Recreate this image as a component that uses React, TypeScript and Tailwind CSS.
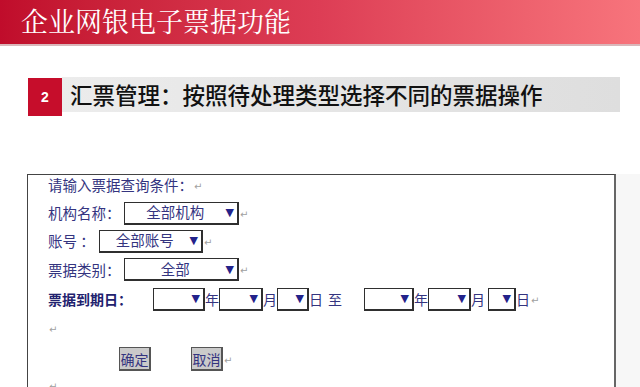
const navy = "text-[#34347f]"

function Select({ w, label, className = "" }: { w: string; label?: string; className?: string }) {
  return (
    <div
      className={`${w} h-[23px] border border-[#2f2f2f] border-r-2 border-b-2 bg-white flex items-center ${className}`}
    >
      <span className="flex-1 text-center text-[14.5px] leading-none">{label}</span>
      <span className="text-[11px] text-[#23238a] pr-[3px] font-['DejaVu_Sans'] leading-none">▼</span>
    </div>
  )
}

function Ret() {
  return <span className="text-[10px] text-[#a0a0a0] font-['DejaVu_Sans'] ml-[1px] mt-[2px]">↵</span>
}

export default function App() {
  return (
    <div className="w-[640px] h-[387px] overflow-hidden bg-white font-['Noto_Sans_CJK_SC',sans-serif]">
      {/* Header band */}
      <div className="h-[46px] bg-gradient-to-r from-[#c00c2b] via-[#dd3d55] to-[#f7747c] border-b-2 border-[#d9b7ba] flex items-center pl-[21px]">
        <h1 className="text-[27px] text-white font-['Noto_Serif_CJK_SC','Noto_Sans_CJK_SC',serif] -mt-[4px] leading-none">
          企业网银电子票据功能
        </h1>
      </div>

      {/* Section title */}
      <div className="flex mt-[32px] ml-[28px]">
        <div className="w-[34px] h-[38px] bg-[#c60d2b] flex items-center justify-center text-white font-bold text-[14px] font-['Liberation_Sans','Noto_Sans_CJK_SC',sans-serif]">
          2
        </div>
        <div className="w-[558px] h-[35px] -mt-[1px] bg-gradient-to-r from-[#ececec] to-[#dedede] flex items-center pl-[8px]">
          <span className="text-[22.5px] text-[#111] font-medium leading-none">汇票管理：按照待处理类型选择不同的票据操作</span>
        </div>
      </div>

      {/* Form area */}
      <div className="flex mt-[58px]">
        <div className="ml-[27px] w-[589px] h-[230px] border-t border-l border-[#444] border-r-2 border-r-[#666] pl-[20px] flex flex-col">
          <div className={`h-[20px] flex items-center text-[14.5px] ${navy}`}>
            请输入票据查询条件：<Ret />
          </div>
          <div className={`h-[28px] mt-[4px] flex items-center text-[14.5px] ${navy}`}>
            <span className="w-[76px]">机构名称：</span>
            <Select w="w-[115px]" label="全部机构" />
            <Ret />
          </div>
          <div className={`h-[28px] flex items-center text-[14.5px] ${navy}`}>
            <span className="w-[51px]">账号 ：</span>
            <Select w="w-[104px]" label="全部账号" />
            <Ret />
          </div>
          <div className={`h-[29px] flex items-center text-[14.5px] ${navy}`}>
            <span className="w-[76px]">票据类别：</span>
            <Select w="w-[115px]" label="全部" />
            <Ret />
          </div>
          <div className={`h-[30px] flex items-center text-[14px] ${navy}`}>
            <span className="w-[105px] font-bold text-[#22226e]">票据到期日：</span>
            <Select w="w-[52px]" />
            <span>年</span>
            <Select w="w-[44px]" />
            <span>月</span>
            <Select w="w-[32px]" />
            <span>日</span>
            <span className="ml-[5px]">至</span>
            <Select w="w-[50px]" className="ml-[22px]" />
            <span>年</span>
            <Select w="w-[43px]" />
            <span>月</span>
            <Select w="w-[28px]" className="ml-[3px]" />
            <span>日</span>
            <Ret />
          </div>
          <div className="h-[29px] flex items-center">
            <Ret />
          </div>
          <div className={`h-[32px] flex items-center text-[14px] ${navy}`}>
            <button className="ml-[71px] w-[32px] h-[24px] bg-[#cacaca] border border-[#555] border-r-2 border-b-2 flex items-center justify-center leading-none">
              确定
            </button>
            <button className="ml-[40px] w-[32px] h-[24px] bg-[#cacaca] border border-[#555] border-r-2 border-b-2 flex items-center justify-center leading-none">
              取消
            </button>
            <Ret />
          </div>
          <div className="h-[20px] flex items-center">
            <Ret />
          </div>
        </div>
        <div className="flex-1 bg-[#f7f7f7]" />
      </div>
    </div>
  )
}
